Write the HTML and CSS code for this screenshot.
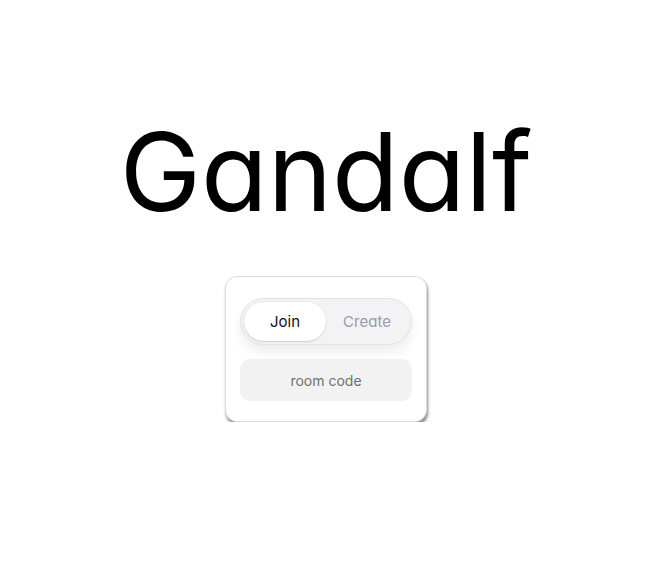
FILE: index.html
```html
<!DOCTYPE html>
<html>
<head>
<meta charset="utf-8">
<link rel="stylesheet" href="styles.css">
</head>
<body>
<main class="page">
  <h1 class="title">Gandalf</h1>
  <div class="card">
    <div class="toggle">
      <button class="opt active">Join</button>
      <button class="opt">Create</button>
    </div>
    <div class="input">room code</div>
  </div>
</main>
</body>
</html>
```
FILE: styles.css
```css
html, body {
  margin: 0;
  padding: 0;
  background: #ffffff;
}
body {
  font-family: Inter, "Noto Sans", sans-serif;
  font-feature-settings: "cv11";
}
.page {
  width: 652px;
  display: flex;
  flex-direction: column;
  align-items: center;
  padding-top: 112px;
}
.title {
  margin: 0;
  font-size: 109px;
  line-height: 118px;
  font-weight: 400;
  color: #000;
  letter-spacing: 0;
}
.card {
  margin-top: 46px;
  width: 202px;
  box-sizing: border-box;
  padding: 21px 14px 20px;
  border: 1px solid #dcdcdc;
  border-radius: 12px;
  background: #fff;
  box-shadow: 1px 3px 3px rgba(0,0,0,0.45);
  display: flex;
  flex-direction: column;
  gap: 14px;
}
.toggle {
  height: 47px;
  box-sizing: border-box;
  border: 1px solid #e2e2e4;
  border-radius: 24px;
  background: #f3f3f5;
  padding: 3px;
  display: flex;
  box-shadow: 0 7px 12px rgba(0,0,0,0.07);
}
.opt {
  flex: 1;
  border: none;
  background: transparent;
  font-family: inherit;
  font-feature-settings: "cv11";
  font-size: 15px;
  color: #9b9ca6;
  border-radius: 21px;
  padding: 0;
}
.opt.active {
  background: #fff;
  color: #111;
  box-shadow: 0 1px 2px rgba(0,0,0,0.12), 0 0 0 1px rgba(0,0,0,0.03);
}
.input {
  height: 42px;
  border-radius: 10px;
  background: #f2f2f2;
  display: flex;
  align-items: center;
  justify-content: center;
  font-size: 14px;
  color: #707070;
}
```
